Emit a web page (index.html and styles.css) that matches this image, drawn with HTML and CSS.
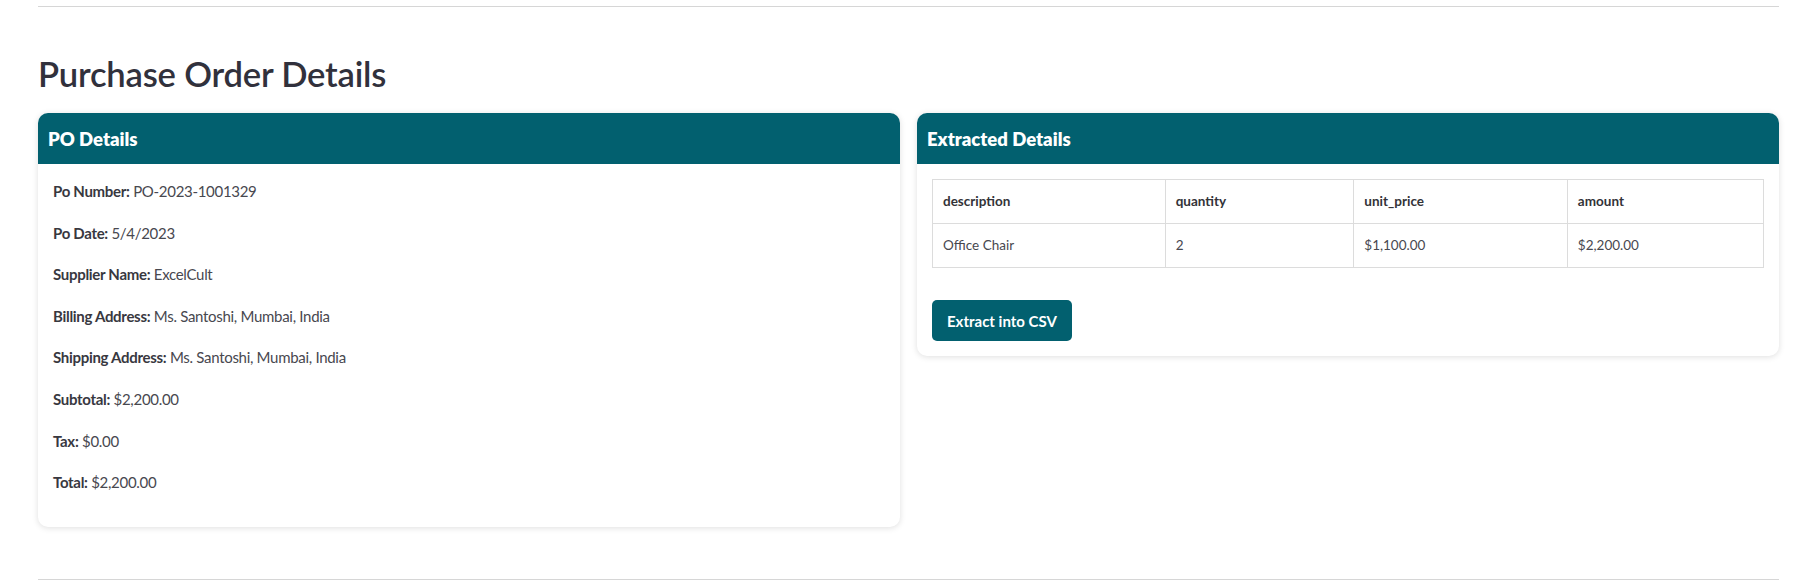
FILE: index.html
```html
<!DOCTYPE html>
<html lang="en">
<head>
<meta charset="utf-8">
<title>Purchase Order Details</title>
<link rel="stylesheet" href="styles.css">
</head>
<body>
<div class="page">
  <hr class="rule rule-top">
  <h1 class="title">Purchase Order Details</h1>
  <div class="grid">
    <section class="card">
      <header class="card-head"><h2 class="card-title">PO Details</h2></header>
      <div class="card-body">
        <p class="field"><strong>Po Number:</strong> PO-2023-1001329</p>
        <p class="field"><strong>Po Date:</strong> 5/4/2023</p>
        <p class="field"><strong>Supplier Name:</strong> ExcelCult</p>
        <p class="field"><strong>Billing Address:</strong> Ms. Santoshi, Mumbai, India</p>
        <p class="field"><strong>Shipping Address:</strong> Ms. Santoshi, Mumbai, India</p>
        <p class="field"><strong>Subtotal:</strong> $2,200.00</p>
        <p class="field"><strong>Tax:</strong> $0.00</p>
        <p class="field"><strong>Total:</strong> $2,200.00</p>
      </div>
    </section>
    <section class="card">
      <header class="card-head"><h2 class="card-title">Extracted Details</h2></header>
      <div class="card-body card-body-table">
        <table class="items">
          <colgroup>
            <col class="c1"><col class="c2"><col class="c3"><col class="c4">
          </colgroup>
          <thead>
            <tr><th>description</th><th>quantity</th><th>unit_price</th><th>amount</th></tr>
          </thead>
          <tbody>
            <tr><td>Office Chair</td><td>2</td><td>$1,100.00</td><td>$2,200.00</td></tr>
          </tbody>
        </table>
        <button class="btn" type="button">Extract into CSV</button>
      </div>
    </section>
  </div>
  <hr class="rule rule-bottom">
</div>
</body>
</html>
```

FILE: styles.css
```css
* { box-sizing: border-box; }

html, body {
  margin: 0;
  padding: 0;
  background: #ffffff;
}

body {
  font-family: "Lato", "Open Sans", sans-serif;
  color: #444449;
}

.page {
  padding: 0 36px 0 38px;
}

.rule {
  border: 0;
  border-top: 1px solid #d6d6d6;
  margin: 0;
}

.rule-top {
  margin-top: 6px;
}

.title {
  margin: 46px 0 0;
  font-size: 34.6px;
  line-height: 42px;
  font-weight: 600;
  color: #31313c;
  letter-spacing: -0.2px;
}

.grid {
  display: grid;
  grid-template-columns: 1fr 1fr;
  gap: 17px;
  align-items: start;
  margin-top: 18px;
}

.card {
  background: #fff;
  border-radius: 10px;
  box-shadow: 0 1px 6px rgba(0, 0, 0, 0.13);
  overflow: hidden;
}

.card-head {
  background: #02606f;
  height: 51px;
  padding: 0 10px;
  display: flex;
  align-items: center;
}

.card-title {
  margin: 0;
  font-size: 18.5px;
  line-height: 24px;
  font-weight: 800;
  color: #ffffff;
}

.card-body {
  padding: 15px 15px 15px;
}

.field {
  margin: 0 0 16px;
  font-size: 15px;
  line-height: 25.6px;
  color: #48484f;
  letter-spacing: -0.3px;
}

.field strong {
  font-weight: 700;
  color: #38383f;
}

.card-body-table {
  padding: 15px 15px 15px;
}

.items {
  width: 100%;
  border-collapse: collapse;
  font-size: 13.5px;
}

.items .c1 { width: 28%; }
.items .c2 { width: 22.7%; }
.items .c3 { width: 25.7%; }
.items .c4 { width: 23.6%; }

.items th,
.items td {
  border: 1px solid #dcdcdc;
  padding: 12px 10px;
  line-height: 19px;
  text-align: left;
}

.items th {
  font-weight: 700;
  color: #333338;
}

.items td {
  color: #48484f;
}

.btn {
  display: block;
  margin-top: 32px;
  height: 41px;
  padding: 0 15px;
  border: 0;
  border-radius: 5px;
  background: #02606f;
  color: #ffffff;
  font-family: inherit;
  font-size: 15px;
  font-weight: 700;
  cursor: pointer;
}

.rule-bottom {
  margin-top: 52px;
}
```
